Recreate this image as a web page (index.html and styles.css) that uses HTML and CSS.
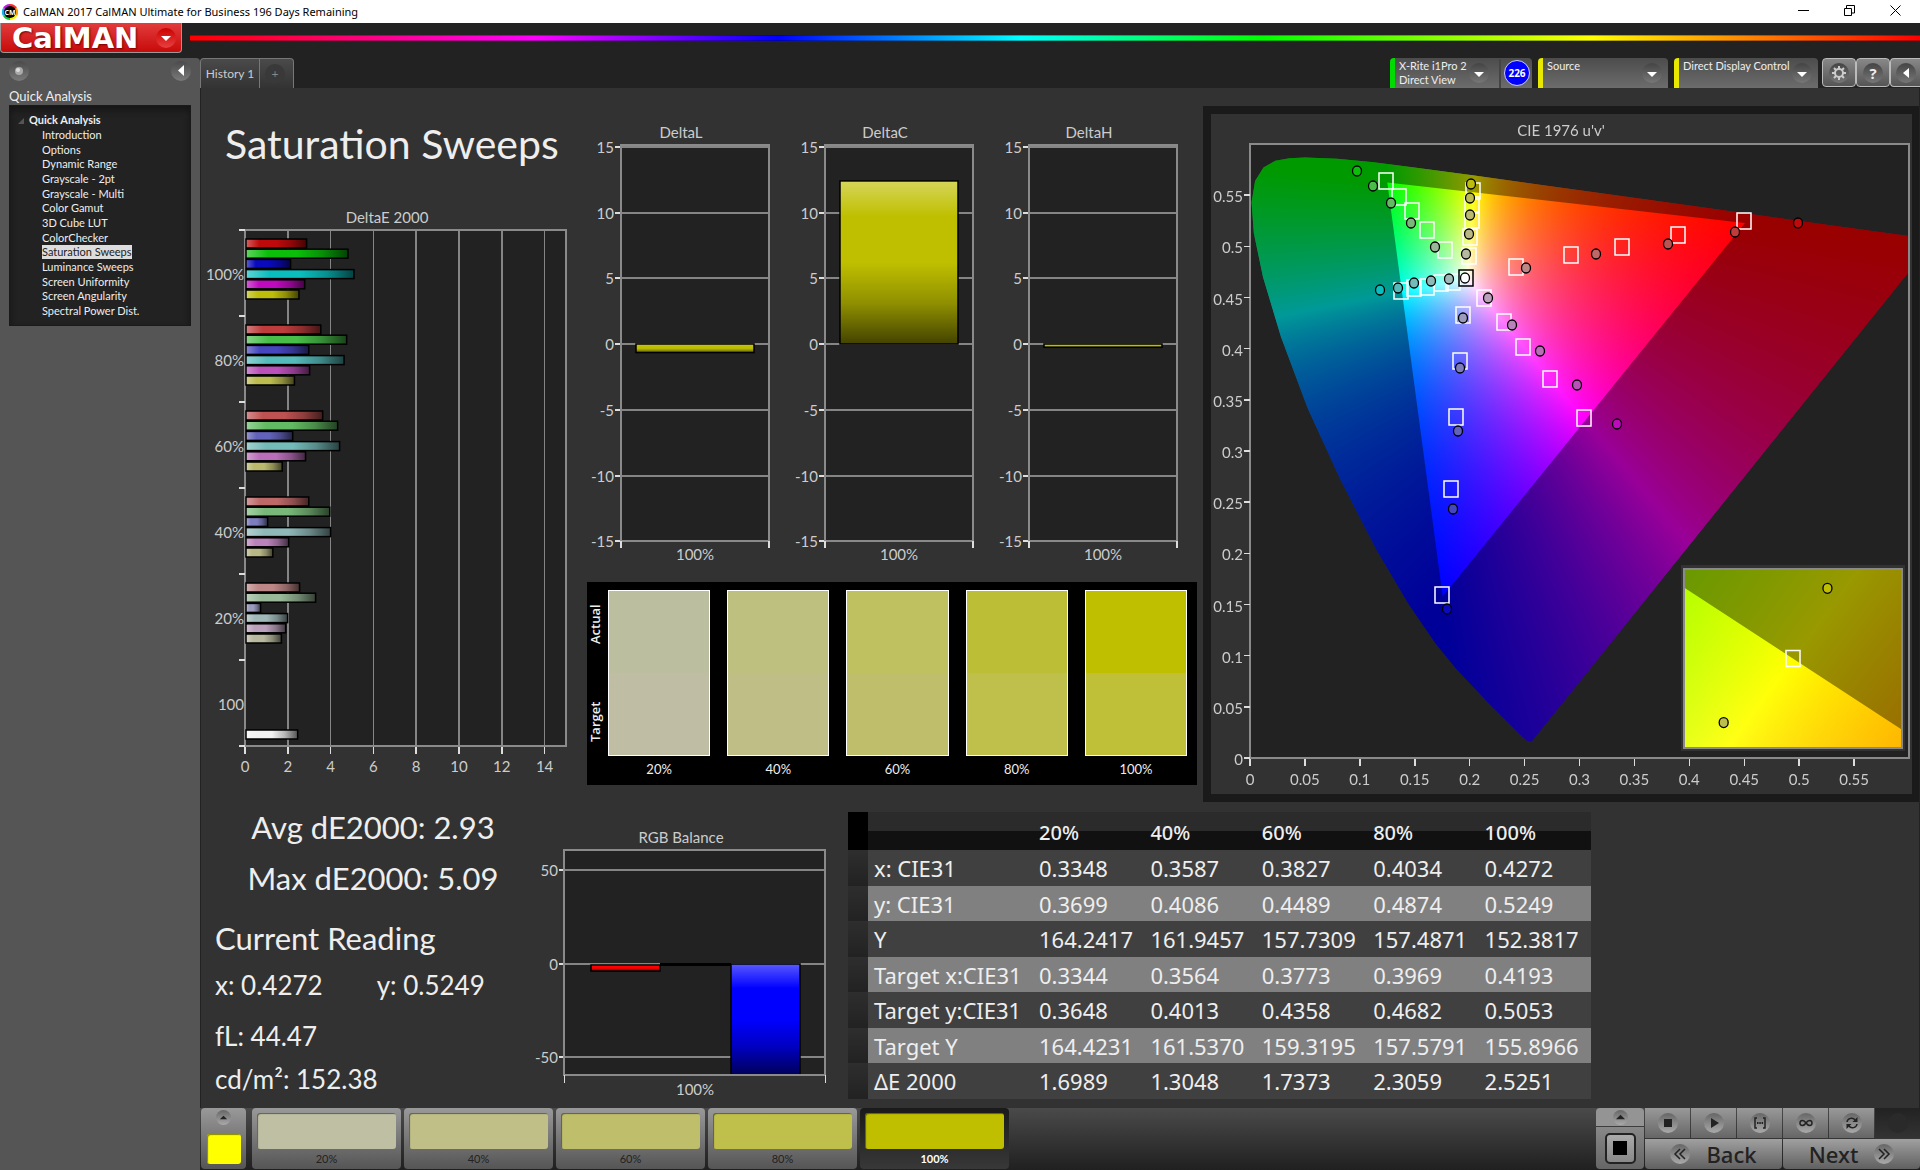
FILE: index.html
```html
<!DOCTYPE html>
<html lang="en">
<head>
  <meta charset="UTF-8" />
  <meta name="viewport" content="width=device-width, initial-scale=1.0"/>
  <title>CalMAN 2017 CalMAN Ultimate for Business</title>
  <link rel="stylesheet" href="styles.css">
</head>

<body>
  <header class="titlebar">
    <svg class="app-icon" viewBox="0 0 16 16">
      <path d="M8 8V0a8 8 0 0 1 7 4z" fill="#ff2a2a"/>
      <path d="M8 8l7-4a8 8 0 0 1 0 8z" fill="#ff9d00"/>
      <path d="M8 8l7 4a8 8 0 0 1-7 4z" fill="#f0f000"/>
      <path d="M8 8v8a8 8 0 0 1-7-4z" fill="#16c83c"/>
      <path d="M8 8l-7 4a8 8 0 0 1 0-8z" fill="#12b4f0"/>
      <path d="M8 8L1 4a8 8 0 0 1 7-4z" fill="#c01ee0"/>
      <circle cx="8" cy="8" r="6" fill="#000"/>
      <text x="8" y="11" text-anchor="middle">CM</text>
    </svg>
    <span class="titlebar-text">CalMAN 2017 CalMAN Ultimate for Business 196 Days Remaining</span>
    <div class="window-buttons">
      <button aria-label="Minimize"><svg viewBox="0 0 11 11"><path d="M0 5.5h11"/></svg></button>
      <button aria-label="Restore"><svg viewBox="0 0 11 11"><path d="M.5 3.5h7v7h-7zM2.500 3V.5h8v7.500H8"/></svg></button>
      <button aria-label="Close"><svg viewBox="0 0 11 11"><path d="M.5.5l10 10M10.500.5l-10 10"/></svg></button>
    </div>
  </header>

  <div class="brandbar">
    <button class="brand">CalMAN
      <span class="knob knob-red"><svg viewBox="0 0 20 20"><path d="M5 8h10l-5 5z"/></svg></span>
    </button>
    <div class="rainbow"></div>
  </div>

  <div class="app">
    <aside class="sidebar">
      <div class="sidebar-top">
        <button class="knob" aria-label="Pin"><svg viewBox="0 0 20 20"><circle cx="10" cy="10" r="4" fill="#aaa"/><circle cx="9" cy="9" r="2" fill="#ddd"/></svg></button>
        <button class="knob" aria-label="Collapse"><svg viewBox="0 0 20 20"><path d="M13 4v11l-6-5.500z"/></svg></button>
      </div>
      <h2>Quick Analysis</h2>
      <nav class="tree">
        <h3><svg viewBox="0 0 6 6"><path d="M6 0v6H0z"/></svg>Quick Analysis</h3>
        <ul>
          <li><a href="#">Introduction</a></li>
          <li><a href="#">Options</a></li>
          <li><a href="#">Dynamic Range</a></li>
          <li><a href="#">Grayscale - 2pt</a></li>
          <li><a href="#">Grayscale - Multi</a></li>
          <li><a href="#">Color Gamut</a></li>
          <li><a href="#">3D Cube LUT</a></li>
          <li><a href="#">ColorChecker</a></li>
          <li><a href="#" class="active">Saturation Sweeps</a></li>
          <li><a href="#">Luminance Sweeps</a></li>
          <li><a href="#">Screen Uniformity</a></li>
          <li><a href="#">Screen Angularity</a></li>
          <li><a href="#">Spectral Power Dist.</a></li>
        </ul>
      </nav>
    </aside>

    <main>
      <div class="toolbar">
        <div class="tabs">
          <button class="tab">History 1</button>
          <button class="tab tab-add" aria-label="Add tab"><span class="knob knob-dark">+</span></button>
        </div>
        <div class="devices">
          <div class="device device-meter">
            <button class="device-menu" aria-haspopup="menu">
              <span class="device-name">X-Rite i1Pro 2<br>Direct View</span>
              <span class="knob knob-dark"><svg viewBox="0 0 20 20"><path d="M5 9h10l-5 5z"/></svg></span>
            </button>
            <span class="badge">226</span>
          </div>
          <button class="device device-source" aria-haspopup="menu">
            <span class="device-name">Source</span>
            <span class="knob knob-dark"><svg viewBox="0 0 20 20"><path d="M5 9h10l-5 5z"/></svg></span>
          </button>
          <button class="device device-display" aria-haspopup="menu">
            <span class="device-name">Direct Display Control</span>
            <span class="knob knob-dark"><svg viewBox="0 0 20 20"><path d="M5 9h10l-5 5z"/></svg></span>
          </button>
          <button class="tool" aria-label="Settings"><span class="knob knob-dark"><svg viewBox="0 0 20 20"><circle cx="10" cy="10" r="4" class="line"/><path class="teeth" d="M10 3v3M10 14v3M3 10h3M14 10h3M5 5l2 2M13 13l2 2M15 5l-2 2M7 13l-2 2"/></svg></span></button>
          <button class="tool" aria-label="Help"><span class="knob knob-dark">?</span></button>
          <button class="tool tool-last" aria-label="Collapse toolbar"><span class="knob knob-dark"><svg viewBox="0 0 20 20"><path d="M13 5v10l-6-5z"/></svg></span></button>
        </div>
      </div>

      <div class="workspace">
        <div class="row-top">
          <section>
            <h1>Saturation Sweeps</h1>
            <svg class="chart" id="deltaE" viewBox="0 0 380 575"></svg>
          </section>

          <section class="middle">
            <div class="deltas">
              <svg class="chart" id="deltaL" viewBox="0 0 204 450"></svg>
              <svg class="chart" id="deltaC" viewBox="0 0 204 450"></svg>
              <svg class="chart" id="deltaH" viewBox="0 0 204 450"></svg>
            </div>
            <div class="swatches">
              <div class="swatch-side"><span>Actual</span><span>Target</span></div>
              <figure><div class="swatch swatch-20"></div><figcaption>20%</figcaption></figure>
              <figure><div class="swatch swatch-40"></div><figcaption>40%</figcaption></figure>
              <figure><div class="swatch swatch-60"></div><figcaption>60%</figcaption></figure>
              <figure><div class="swatch swatch-80"></div><figcaption>80%</figcaption></figure>
              <figure><div class="swatch swatch-100"></div><figcaption>100%</figcaption></figure>
            </div>
          </section>

          <section class="cie">
            <canvas id="gamut" width="701" height="680"></canvas>
            <svg class="chart" id="cie" viewBox="0 0 701 680"></svg>
          </section>
        </div>

        <div class="row-bottom">
          <section class="readings">
            <p class="stat">Avg dE2000: 2.93</p>
            <p class="stat">Max dE2000: 5.09</p>
            <h2>Current Reading</h2>
            <p class="xy"><span>x: 0.4272</span><span>y: 0.5249</span></p>
            <p class="fl">fL: 44.47</p>
            <p class="cd">cd/m²: 152.38</p>
          </section>

          <svg class="chart" id="rgb" viewBox="0 0 328 295"></svg>

          <table>
            <thead>
              <tr><th class="mark"></th><th class="name"></th><th>20%</th><th>40%</th><th>60%</th><th>80%</th><th>100%</th></tr>
            </thead>
            <tbody>
              <tr><td class="mark"></td><th>x: CIE31</th><td>0.3348</td><td>0.3587</td><td>0.3827</td><td>0.4034</td><td>0.4272</td></tr>
              <tr><td class="mark"></td><th>y: CIE31</th><td>0.3699</td><td>0.4086</td><td>0.4489</td><td>0.4874</td><td>0.5249</td></tr>
              <tr><td class="mark"></td><th>Y</th><td>164.2417</td><td>161.9457</td><td>157.7309</td><td>157.4871</td><td>152.3817</td></tr>
              <tr><td class="mark"></td><th>Target x:CIE31</th><td>0.3344</td><td>0.3564</td><td>0.3773</td><td>0.3969</td><td>0.4193</td></tr>
              <tr><td class="mark"></td><th>Target y:CIE31</th><td>0.3648</td><td>0.4013</td><td>0.4358</td><td>0.4682</td><td>0.5053</td></tr>
              <tr><td class="mark"></td><th>Target Y</th><td>164.4231</td><td>161.5370</td><td>159.3195</td><td>157.5791</td><td>155.8966</td></tr>
              <tr><td class="mark"></td><th>ΔE 2000</th><td>1.6989</td><td>1.3048</td><td>1.7373</td><td>2.3059</td><td>2.5251</td></tr>
            </tbody>
          </table>
        </div>
      </div>

      <footer class="bottombar">
        <button class="current" aria-label="Current color">
          <span class="mini"><svg viewBox="0 0 12 12"><path d="M2 8h8L6 4z"/></svg></span>
          <span class="current-color"></span>
        </button>
        <div class="patches">
          <button class="patch"><span class="color color-20"></span>20%</button>
          <button class="patch"><span class="color color-40"></span>40%</button>
          <button class="patch"><span class="color color-60"></span>60%</button>
          <button class="patch"><span class="color color-80"></span>80%</button>
          <button class="patch selected"><span class="color color-100"></span>100%</button>
        </div>
        <div class="transport">
          <div class="window-mode">
            <button aria-label="Expand"><span class="mini"><svg viewBox="0 0 12 12"><path d="M1 8h10L6 3z"/></svg></span></button>
            <button aria-label="Pattern window"><span class="pattern"></span></button>
          </div>
          <div class="controls">
            <button aria-label="Stop"><span class="knob knob-light"><svg viewBox="0 0 20 20"><path d="M6 6h8v8H6z"/></svg></span></button>
            <button aria-label="Play"><span class="knob knob-light"><svg viewBox="0 0 20 20"><path d="M7 5l8 5-8 5z"/></svg></span></button>
            <button aria-label="Read range"><span class="knob knob-light"><svg viewBox="0 0 20 20"><path class="line" d="M7 5H5v10h2M13 5h2v10h-2"/><path d="M7 9h1.500v2H7zM9.300 9h1.500v2H9.300zM11.600 9h1.500v2h-1.500z"/></svg></span></button>
            <button aria-label="Read continuous"><span class="knob knob-light"><svg viewBox="0 0 20 20"><path class="line" d="M10 10c-2-3-6-3.500-6 0s4 3 6 0 6-3.500 6 0-4 3-6 0z"/></svg></span></button>
            <button aria-label="Repeat"><span class="knob knob-light"><svg viewBox="0 0 20 20"><path class="line" d="M5 9c.5-4 6-5 8-2M15 11c-.5 4-6 5-8 2"/><path d="M15.500 4v5h-5zM4.500 16v-5h5z"/></svg></span></button>
            <button class="off" aria-label="Record"><span class="knob knob-off"></span></button>
            <button class="wide"><span class="knob knob-light"><svg viewBox="0 0 20 20"><path class="line" d="M10 5l-5 5 5 5M15 5l-5 5 5 5"/></svg></span>Back</button>
            <button class="wide">Next<span class="knob knob-light"><svg viewBox="0 0 20 20"><path class="line" d="M10 5l5 5-5 5M5 5l5 5-5 5"/></svg></span></button>
          </div>
        </div>
      </footer>
    </main>
  </div>

  <script src="script.js"></script>
</body>
</html>
```

FILE: styles.css
```css
* {
  margin: 0;
  padding: 0;
  box-sizing: border-box;
}

body {
  background: #222;
  color: #eee;
  font-family: Lato, sans-serif;
  font-size: 11px;
  display: flex;
  flex-direction: column;
  min-height: 100vh;
}

button {
  border: none;
  background: none;
  color: inherit;
  font: inherit;
  cursor: pointer;
}

a {
  color: inherit;
  text-decoration: none;
}

/* window chrome */
.titlebar {
  display: flex;
  align-items: center;
  height: 23px;
  background: #fff;
  color: #000;
}

.app-icon {
  width: 16px;
  height: 16px;
  margin: 0 5px 0 2px;
}

.app-icon text {
  font: bold 7px "Open Sans", sans-serif;
  fill: #fff;
}

.titlebar-text {
  font-family: "Noto Sans", sans-serif;
  font-size: 11px;
}

.window-buttons {
  display: flex;
  margin-left: auto;
  margin-right: 2px;
}

.window-buttons button {
  width: 46px;
  height: 20px;
}

.window-buttons svg {
  width: 11px;
  height: 11px;
  fill: none;
  stroke: #000;
}

.brandbar {
  display: flex;
  height: 35px;
}

.brand {
  display: flex;
  align-items: center;
  justify-content: space-between;
  width: 182px;
  height: 30px;
  padding: 0 5px 0 11px;
  border: 1px solid #999;
  border-top: none;
  border-radius: 0 0 4px 4px;
  background: linear-gradient(#e23c3c, #c80a0a);
  color: #fff;
  font-family: "DejaVu Sans", sans-serif;
  font-size: 29px;
  font-weight: 700;
  line-height: 28px;
  text-shadow: 1px 1px 2px #700;
}

.rainbow {
  flex: 1;
  height: 6px;
  margin: 12px 0 0 8px;
  background: linear-gradient(90deg, #f00, #f0f 20%, #00f 34%, #0ff 48%, #0f0 62%, #ff0 81%, #f00);
  border-top: 1px solid rgba(0,0,0,0.3);
  border-bottom: 1px solid rgba(0,0,0,0.3);
}

.knob {
  display: flex;
  align-items: center;
  justify-content: center;
  flex: none;
  width: 20px;
  height: 20px;
  border-radius: 50%;
  background: linear-gradient(#4a4a4a, #7a7a7a);
}

.knob svg {
  width: 20px;
  height: 20px;
  fill: #fff;
}

.knob .line {
  fill: none;
  stroke: #ccc;
  stroke-width: 2;
}

.knob .teeth {
  stroke: #ccc;
  stroke-width: 2;
}

.knob-red {
  background: linear-gradient(#c00, #e84040);
}

.knob-dark {
  background: linear-gradient(#444, #777);
}

.knob-light {
  background: linear-gradient(#666, #aaa);
}

.knob-light svg {
  fill: #222;
}

.knob-light .line {
  stroke: #222;
  stroke-width: 1.5;
}

.knob-off {
  background: #2a2a2a;
}

/* sidebar */
.app {
  flex: 1;
  display: flex;
}

.sidebar {
  width: 200px;
  flex: none;
  padding: 3px 9px;
  background: #555;
  border-top-right-radius: 4px;
}

.sidebar-top {
  display: flex;
  justify-content: space-between;
}

.sidebar h2 {
  font-size: 13px;
  font-weight: 400;
  line-height: 18px;
  margin-top: 6px;
}

.tree {
  background: #222;
  border: 1px solid #1a1a1a;
  box-shadow: inset 0 4px 6px #151515;
  padding: 6px 8px 7px;
}

.tree h3 {
  font-size: 11px;
  line-height: 16px;
}

.tree h3 svg {
  width: 6px;
  height: 6px;
  margin-right: 5px;
  fill: #555;
}

.tree ul {
  list-style: none;
  display: flex;
  flex-direction: column;
  justify-content: space-between;
  height: 190px;
  padding-left: 24px;
}

.tree li {
  line-height: 14px;
}

.tree .active {
  display: inline-block;
  background: #ddd;
  color: #222;
}

/* toolbar */
main {
  flex: 1;
  min-width: 0;
  display: flex;
  flex-direction: column;
}

.toolbar {
  display: flex;
  justify-content: space-between;
  height: 30px;
}

.tabs {
  display: flex;
  border: 1px solid #777;
  border-bottom: none;
  border-radius: 4px 4px 0 0;
  background: linear-gradient(#4a4a4a, #333);
}

.tab {
  width: 58px;
  color: #ccc;
  font-size: 12px;
}

.tab-add {
  width: 34px;
  padding-left: 5px;
  border-left: 1px solid #777;
  color: #888;
}

.tab-add .knob {
  background: #393939;
}

.devices {
  display: flex;
  gap: 6px;
}

.device {
  display: flex;
  justify-content: space-between;
  width: 130px;
  padding: 1px 6px 0 4px;
  border-left: 5px solid #e8e800;
  border-radius: 4px 4px 0 0;
  background: linear-gradient(#4c4c4c, #6c6c6c);
  text-align: left;
  line-height: 14px;
}

.device .knob {
  margin-top: 4px;
}

.device-name {
  white-space: nowrap;
}

.device-meter {
  width: 142px;
  padding-right: 2px;
  border-left-color: #00dc00;
}

.device-menu {
  display: flex;
  justify-content: space-between;
  width: 102px;
  padding-right: 10px;
  border-right: 2px solid #444;
  text-align: left;
}

.device-display {
  width: 144px;
}

.badge {
  width: 26px;
  height: 26px;
  margin-top: 1px;
  border: 1px solid #ccf;
  border-radius: 50%;
  background: #00f;
  color: #fff;
  font: bold 10px/24px "Open Sans", sans-serif;
  text-align: center;
}

.tool {
  display: flex;
  align-items: center;
  justify-content: center;
  width: 34px;
  height: 29px;
  margin-right: -4px;
  margin-left: -2px;
  border: 1px solid #bbb;
  border-radius: 4px;
  background: linear-gradient(#888, #555);
  font: bold 15px "Open Sans", sans-serif;
}

.tool-last {
  width: 30px;
  margin-right: 0;
  border-right: none;
  border-radius: 4px 0 0 4px;
}

/* workspace */
.workspace {
  flex: 1;
  background: #323232;
  border: solid #222;
  border-width: 0 1px;
}

.row-top {
  display: grid;
  grid-template-columns: minmax(0, 380fr) minmax(0, 622fr) minmax(0, 716fr);
}

h1 {
  font-size: 41px;
  font-weight: 400;
  line-height: 60px;
  padding: 26px 0 26px 24px;
  white-space: nowrap;
}

.chart {
  display: block;
  width: 100%;
  font-size: 15px;
  fill: #ccc;
}

.middle {
  padding: 32px 6px 0 0;
}

.deltas {
  display: flex;
  padding-right: 4px;
}

.deltas .chart {
  flex: 1;
  min-width: 0;
}

.swatches {
  display: flex;
  gap: 17px;
  margin: 12px 0 0 6px;
  padding: 8px 10px 7px 0;
  background: #000;
}

.swatch-side {
  display: flex;
  flex-direction: row-reverse;
  justify-content: space-between;
  writing-mode: vertical-rl;
  transform: rotate(180deg);
  width: 16px;
  height: 166px;
  margin-right: -12px;
  padding: 14px 0;
  line-height: 16px;
  font-family: "Open Sans", sans-serif;
  font-size: 13px;
  font-weight: 600;
}

.swatches figure {
  flex: 1;
}

.swatch {
  height: 166px;
  border: 1px solid #fff;
}

.swatch-20 { background: linear-gradient(#bcbf9f 50%, #bfbea4 50%); }
.swatch-40 { background: linear-gradient(#bec080 50%, #c0be87 50%); }
.swatch-60 { background: linear-gradient(#bfc060 50%, #bfbe6b 50%); }
.swatch-80 { background: linear-gradient(#bcbf35 50%, #bfbf4c 50%); }
.swatch-100 { background: linear-gradient(#bfbf00 50%, #bfbf38 50%); }

.swatches figcaption {
  margin-top: 5px;
  font-size: 13px;
  line-height: 17px;
  text-align: center;
}

/* canvas and axes share one grid cell */
.cie {
  display: grid;
  align-self: start;
  margin-top: 18px;
  border: 8px solid #1a1a1a;
  border-right-width: 7px;
}

.cie canvas,
.cie .chart {
  grid-area: 1 / 1;
  width: 100%;
}

.row-bottom {
  display: grid;
  grid-template-columns: minmax(0, 319fr) minmax(0, 328fr) minmax(0, 743fr) minmax(0, 328fr);
  align-items: start;
}

.readings {
  padding-left: 14px;
  font-size: 26px;
  white-space: nowrap;
}

.readings .stat {
  width: 316px;
  font-size: 31px;
  line-height: 51px;
  text-align: center;
}

.readings h2 {
  margin-top: 11px;
  font-size: 31px;
  font-weight: 400;
  line-height: 46px;
}

.readings .xy {
  display: flex;
  gap: 54px;
  line-height: 48px;
}

.readings .fl {
  line-height: 54px;
}

.readings .cd {
  line-height: 32px;
}

table {
  width: 100%;
  margin-top: 10px;
  border-collapse: collapse;
  table-layout: fixed;
  font-family: "Noto Sans", sans-serif;
  font-size: 22px;
  line-height: 28px;
  text-align: left;
  white-space: nowrap;
}

thead tr {
  height: 38px;
  background: linear-gradient(#2b2b2b 50%, #111 50%);
  font-size: 20px;
}

thead th {
  font-weight: 500;
  padding: 4px 0 0 5px;
}

tbody tr {
  height: 36px;
  background: #404040;
}

tbody tr:nth-child(even) {
  height: 35px;
  background: #808080;
}

tbody th {
  font-weight: 400;
  padding-left: 6px;
}

tbody td {
  padding-left: 5px;
}

table .mark {
  width: 20px;
  background: linear-gradient(#2e2e2e, #222);
}

thead .mark {
  background: #000;
}

table .name {
  width: 166px;
}

/* bottom bar */
.bottombar {
  display: flex;
  height: 62px;
  padding: 0 0 1px 1px;
  background: linear-gradient(#4a4a4a, #202020);
}

.current {
  width: 45px;
  padding-top: 2px;
  border-radius: 4px;
  background: linear-gradient(#999, #555);
  display: flex;
  flex-direction: column;
  align-items: center;
  gap: 9px;
}

.mini {
  display: flex;
  width: 15px;
  height: 15px;
  border-radius: 50%;
  background: linear-gradient(#666, #aaa);
  align-items: center;
  justify-content: center;
}

.mini svg {
  width: 11px;
  height: 11px;
  fill: #222;
}

.current-color {
  width: 34px;
  height: 30px;
  border-radius: 3px;
  background: #ff0;
  box-shadow: inset 1px 1px 1px #880;
}

.patches {
  display: flex;
  gap: 3px;
  margin-left: 6px;
}

.patch {
  width: 149px;
  padding: 4px 5px 0;
  border-radius: 4px;
  background: linear-gradient(#999, #555);
  color: #222;
  font-size: 11px;
  line-height: 20px;
}

.patch.selected {
  background: linear-gradient(#1a1a1a, #383838);
  color: #fff;
  font-weight: 700;
}

.color {
  display: block;
  height: 36px;
  border-radius: 3px;
  box-shadow: inset 1px 1px 1px rgba(0,0,0,0.5);
}

.color-20 { background: #bfbfa4; }
.color-40 { background: #c0bf87; }
.color-60 { background: #bfbe6b; }
.color-80 { background: #bfbf4c; }
.color-100 { background: #bfbf00; }

.transport {
  display: flex;
  gap: 1px;
  margin-left: auto;
}

.window-mode {
  display: flex;
  flex-direction: column;
  gap: 1px;
  width: 48px;
}

.window-mode button {
  display: flex;
  align-items: center;
  justify-content: center;
  height: 18px;
  border-radius: 4px 4px 0 0;
  background: #949494;
}

.window-mode button + button {
  flex: 1;
  border-radius: 0 0 4px 4px;
  background: linear-gradient(#888, #666);
}

.pattern {
  width: 31px;
  height: 31px;
  border: 2px solid #222;
  border-radius: 5px;
  background: linear-gradient(#000, #000) center / 14px 14px no-repeat, linear-gradient(#aaa, #888);
}

.controls {
  display: grid;
  grid-template-columns: repeat(6, 45px);
  grid-template-rows: 30px 30px;
  gap: 1px;
}

.controls button {
  display: flex;
  align-items: center;
  justify-content: center;
  background: linear-gradient(#999, #666);
}

.controls .off {
  background: linear-gradient(#222, #333);
}

.controls .wide {
  grid-column: span 3;
  gap: 16px;
  background: linear-gradient(#a0a0a0, #606060);
  color: #222;
  font-family: "Noto Sans", sans-serif;
  font-size: 22px;
  font-weight: 500;
  border-radius: 0 0 4px 4px;
}
```

FILE: script.js
```js
const NS = "http://www.w3.org/2000/svg";

// red, green, blue, cyan, magenta, yellow at each saturation
const palette = {
  100: ["#be0a0a", "#0abe0a", "#0a0abe", "#0abebe", "#be0abe", "#bebe0a"],
  80: ["#be3c3c", "#48be48", "#4646be", "#55baba", "#ba50ba", "#bcbc50"],
  60: ["#be5252", "#62ba62", "#6262ba", "#73bab8", "#ba6eba", "#bab96e"],
  40: ["#be6868", "#7ab87a", "#7d7dbe", "#8fb8b8", "#ba82ba", "#b8b887"],
  20: ["#be8787", "#98b898", "#9b9bbe", "#a0b8b8", "#baa0ba", "#b8b89e"]
};

function add(svg, name, attrs, text) {
  const node = document.createElementNS(NS, name);
  for (const key in attrs) node.setAttribute(key, attrs[key]);
  if (text !== undefined) node.textContent = text;
  svg.appendChild(node);
  return node;
}

function line(svg, x1, y1, x2, y2, stroke = "#858585", width = 1) {
  add(svg, "line", { x1, y1, x2, y2, stroke, "stroke-width": width, "shape-rendering": "crispEdges" });
}

function label(svg, x, y, text, anchor = "middle") {
  add(svg, "text", { x, y, "text-anchor": anchor }, text);
}

function frame(svg, x, y, width, height) {
  add(svg, "rect", { x, y, width, height, fill: "none", stroke: "#8a8a8a", "stroke-width": 2, "shape-rendering": "crispEdges" });
}

function gloss(svg, id, horizontal) {
  const defs = add(svg, "defs", {});
  const g = add(defs, "linearGradient", { id, x1: 0, y1: 0, x2: horizontal ? 1 : 0, y2: horizontal ? 0 : 1 });
  [[0, "#fff", 0.35], [0.22, "#fff", 0], [0.5, "#000", 0], [0.75, "#000", 0.25], [1, "#000", 0.65]].forEach(s =>
    add(g, "stop", { offset: s[0], "stop-color": s[1], "stop-opacity": s[2] }));
}

function bar(svg, id, x, y, width, height, fill) {
  add(svg, "rect", { x, y, width, height, fill });
  add(svg, "rect", { x, y, width, height, fill: `url(#${id})`, stroke: "#000", "stroke-width": 1.5 });
}

// DeltaE 2000
function drawDeltaE() {
  const svg = document.getElementById("deltaE");
  const left = 44, top = 30, unit = 21.4, group = 86;
  const rows = [
    ["100%", 100, [2.88, 4.81, 2.13, 5.09, 2.79, 2.52]],
    ["80%", 80, [3.54, 4.75, 2.98, 4.63, 3.02, 2.31]],
    ["60%", 60, [3.63, 4.33, 2.23, 4.42, 2.83, 1.74]],
    ["40%", 40, [2.98, 3.96, 1.06, 4.0, 2.04, 1.3]],
    ["20%", 20, [2.55, 3.3, 0.73, 1.99, 1.9, 1.7]],
    ["100", 0, []]
  ];
  gloss(svg, "glossE", true);
  add(svg, "rect", { x: left, y: top, width: 321, height: 516, fill: "#222" });
  for (let v = 0; v <= 14; v += 2) {
    const x = left + v * unit;
    if (v) line(svg, x, top, x, top + 516, "#858585", 1.5);
    line(svg, x, top + 517, x, top + 524, "#ddd", 1.5);
    label(svg, x, top + 542, v);
  }
  frame(svg, left, top, 321, 516);
  for (let i = 0; i <= 6; i++) line(svg, left - 6, top + i * group, left, top + i * group, "#ddd", 2);
  rows.forEach((row, i) => {
    label(svg, left - 1, top + i * group + 50, row[0], "end");
    row[2].forEach((v, j) =>
      bar(svg, "glossE", left + 1, top + i * group + 9 + j * 10.2, v * unit - 1, 9, palette[row[1]][j]));
  });
  bar(svg, "glossE", left + 1, top + 5 * group + 70, 2.46 * unit - 1, 9, "#f2f2f2");
  label(svg, 186, 23, "DeltaE 2000");
}

// DeltaL / DeltaC / DeltaH
function drawDelta(id, value) {
  const svg = document.getElementById(id);
  const left = 40, right = 188, zero = 224, unit = 13.15;
  gloss(svg, "gloss" + id, false);
  add(svg, "rect", { x: left, y: 25, width: right - left, height: 396, fill: "#222" });
  for (let v = -15; v <= 15; v += 5) {
    const y = zero - v * unit;
    line(svg, left, y, right, y, "#858585", 2);
    line(svg, left - 6, y, left, y, "#ddd", 2);
    label(svg, left - 7, y + 6, v, "end");
  }
  frame(svg, left, 25, right - left, 396);
  line(svg, left, 421, left, 428, "#ddd", 2);
  line(svg, right, 421, right, 428, "#ddd", 2);
  const h = Math.abs(value) * unit;
  bar(svg, "gloss" + id, 55, value > 0 ? zero - h : zero, 118, h, "#bfbf00");
  label(svg, 100, 18, id.replace("delta", "Delta"));
  label(svg, 114, 440, "100%");
}

function drawRgb() {
  const svg = document.getElementById("rgb");
  gloss(svg, "glossRgb", false);
  add(svg, "rect", { x: 44, y: 48, width: 261, height: 225, fill: "#222" });
  [[50, 68], [0, 162], [-50, 255]].forEach(([v, y]) => {
    line(svg, 44, y, 305, y, "#858585", 2);
    line(svg, 39, y, 44, y, "#ddd", 2);
    label(svg, 38, y + 6, v, "end");
  });
  bar(svg, "glossRgb", 71, 163, 69, 6, "#f00");
  line(svg, 140, 162, 211, 162, "#000", 3);
  bar(svg, "glossRgb", 211, 162, 69, 111, "#00f");
  frame(svg, 44, 48, 261, 225);
  line(svg, 44, 273, 44, 281, "#ddd");
  line(svg, 305, 273, 305, 281, "#ddd");
  label(svg, 161, 41, "RGB Balance");
  label(svg, 175, 293, "100%");
}

// CIE 1976 chart: plot area inside the canvas and svg
const plot = { x: 39, y: 30, w: 659, h: 614, max: 0.6 };
const inset = { x: 473, y: 455, w: 218, h: 179, cx: 0.4193, cy: 0.5053, range: 0.05 };

const locus = [
  [.1741, .0050], [.1733, .0048], [.1714, .0051], [.1689, .0069], [.1644, .0109], [.1566, .0177], [.1440, .0297],
  [.1355, .0399], [.1241, .0578], [.1096, .0868], [.0913, .1327], [.0687, .2007], [.0454, .2950], [.0235, .4127],
  [.0082, .5384], [.0039, .6548], [.0139, .7502], [.0389, .8120], [.0743, .8338], [.1142, .8262], [.1547, .8059],
  [.2296, .7543], [.3016, .6923], [.3731, .6245], [.4441, .5547], [.5125, .4866], [.5752, .4242], [.6270, .3725],
  [.6915, .3083], [.7190, .2809], [.7347, .2653]
];
const rec709 = [[.64, .33], [.3, .6], [.15, .06]];

function toPlot([x, y]) {
  const d = -2 * x + 12 * y + 3;
  return [plot.x + 4 * x / d / plot.max * plot.w, plot.y + plot.h - 9 * y / d / plot.max * plot.h];
}

function toInset([x, y]) {
  return [
    inset.x + inset.w / 2 + (x - inset.cx) / inset.range * inset.w,
    inset.y + inset.h / 2 - (y - inset.cy) / inset.range * inset.h
  ];
}

function xyToRgb(x, y) {
  const z = 1 - x - y;
  const rgb = [
    3.2406 * x - 1.5372 * y - 0.4986 * z,
    -0.9689 * x + 1.8758 * y + 0.0415 * z,
    0.0557 * x - 0.2040 * y + 1.0570 * z
  ].map(c => Math.max(c, 0));
  const top = Math.max(...rgb);
  return rgb.map(c => 255 * c / top);
}

function paint(w, h, toXy) {
  const c = document.createElement("canvas");
  c.width = w;
  c.height = h;
  const ctx = c.getContext("2d");
  const img = ctx.createImageData(w, h);
  for (let py = 0; py < h; py++) {
    for (let px = 0; px < w; px++) {
      const [x, y] = toXy(px + 0.5, py + 0.5);
      img.data.set([...xyToRgb(x, y), 255], (py * w + px) * 4);
    }
  }
  ctx.putImageData(img, 0, 0);
  return c;
}

function trace(path, points) {
  points.forEach(([x, y], i) => i ? path.lineTo(x, y) : path.moveTo(x, y));
  path.closePath();
}

function drawGamut() {
  const ctx = document.getElementById("gamut").getContext("2d");
  ctx.fillStyle = "#222";
  ctx.fillRect(plot.x, plot.y, plot.w, plot.h);

  ctx.save();
  ctx.beginPath();
  ctx.rect(plot.x, plot.y, plot.w, plot.h);
  ctx.clip();
  const shape = new Path2D();
  trace(shape, locus.map(toPlot));
  ctx.clip(shape);
  ctx.drawImage(paint(plot.w, plot.h, (px, py) => {
    const u = px / plot.w * plot.max, v = (plot.h - py) / plot.h * plot.max;
    const d = 6 * u - 16 * v + 12;
    return [9 * u / d, 4 * v / d];
  }), plot.x, plot.y);
  // outside of Rec.709 is dimmed
  const dim = new Path2D();
  dim.rect(0, 0, 701, 680);
  trace(dim, rec709.map(toPlot));
  ctx.fillStyle = "rgba(0,0,0,0.4)";
  ctx.fill(dim, "evenodd");
  ctx.restore();

  ctx.fillStyle = "#323232";
  ctx.fillRect(inset.x - 3, inset.y - 4, inset.w + 6, inset.h + 7);
  ctx.save();
  ctx.beginPath();
  ctx.rect(inset.x, inset.y, inset.w, inset.h);
  ctx.clip();
  ctx.drawImage(paint(inset.w, inset.h, (px, py) => [
    inset.cx + (px / inset.w - 0.5) * inset.range,
    inset.cy - (py / inset.h - 0.5) * inset.range
  ]), inset.x, inset.y);
  const dimInset = new Path2D();
  dimInset.rect(inset.x, inset.y, inset.w, inset.h);
  trace(dimInset, rec709.map(toInset));
  ctx.fillStyle = "rgba(0,0,0,0.4)";
  ctx.fill(dimInset, "evenodd");
  ctx.restore();
}

// marker positions inside the plot, from 100% down to 20%
const targets = [
  [[494, 77], [428, 91], [372, 103], [321, 111], [266, 123]],
  [[136, 37], [149, 53], [162, 67], [177, 86], [195, 106]],
  [[192, 451], [201, 345], [206, 273], [210, 217], [213, 171]],
  [[151, 147], [164, 144], [177, 143], [191, 139], [203, 138]],
  [[334, 274], [300, 235], [273, 203], [254, 178], [234, 154]],
  [[223, 47], [222, 61], [222, 76], [220, 93], [219, 112]]
];
const actuals = [
  [[548, 79], [485, 88], [418, 100], [346, 110], [276, 124]],
  [[107, 27], [123, 42], [141, 59], [161, 79], [185, 103]],
  [[197, 465], [203, 365], [208, 287], [210, 224], [213, 174]],
  [[130, 146], [148, 144], [164, 139], [181, 137], [199, 135]],
  [[367, 280], [327, 241], [290, 207], [262, 181], [238, 154]],
  [[221, 40], [220, 54], [220, 71], [219, 90], [216, 110]]
];

function square(svg, x, y, stroke = "#fff") {
  add(svg, "rect", { x: x - 7, y: y - 8, width: 14, height: 16, fill: "none", stroke, "stroke-width": 1.5 });
}

function dot(svg, x, y, fill) {
  add(svg, "ellipse", { cx: x, cy: y, rx: 4.5, ry: 5, fill, stroke: "#000", "stroke-width": 1.3 });
}

function drawCie() {
  const svg = document.getElementById("cie");
  frame(svg, plot.x, plot.y, plot.w, plot.h);
  for (let i = 0; i <= 11; i++) {
    const text = String(i * 5 / 100);
    const x = plot.x + i / 12 * plot.w, y = plot.y + plot.h - i / 12 * plot.h;
    line(svg, x, 645, x, 652, "#ddd", 1.5);
    label(svg, x, 671, text);
    line(svg, 33, y, 39, y, "#ddd", 1.5);
    label(svg, 32, y + 7, text, "end");
  }
  const sats = [100, 80, 60, 40, 20];
  targets.forEach(hue => hue.forEach(([x, y]) => square(svg, plot.x + x, plot.y + y)));
  actuals.forEach((hue, h) => hue.forEach(([x, y], i) => dot(svg, plot.x + x, plot.y + y, palette[sats[i]][h])));
  square(svg, plot.x + 216, plot.y + 134, "#000");
  dot(svg, plot.x + 215, plot.y + 134, "#fff");

  frame(svg, inset.x, inset.y, inset.w, inset.h);
  const dots = [[[.4272, .5249], "#bfbf00"], [[.4034, .4874], "#bcbf4c"]];
  dots.forEach(([p, fill]) => dot(svg, ...toInset(p), fill));
  square(svg, ...toInset([inset.cx, inset.cy]));
  label(svg, 350, 22, "CIE 1976 u'v'");
}

drawDeltaE();
drawDelta("deltaL", -0.65);
drawDelta("deltaC", 12.4);
drawDelta("deltaH", -0.25);
drawRgb();
drawGamut();
drawCie();
```
